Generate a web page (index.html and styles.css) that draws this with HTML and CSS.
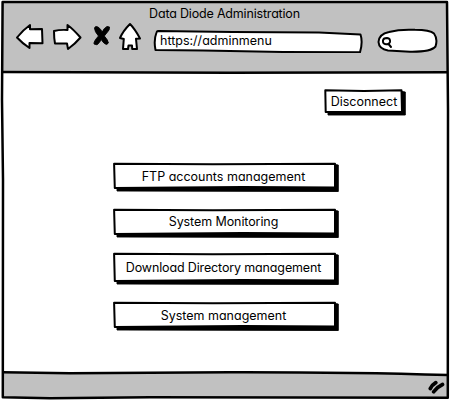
FILE: index.html
```html
<!DOCTYPE html>
<html lang="en">
<head>
<meta charset="utf-8">
<title>Data Diode Administration</title>
<link rel="stylesheet" href="styles.css">
</head>
<body>
<div class="window">
  <svg class="frame" viewBox="0 0 450 400" aria-hidden="true">
    <path class="chrome" d="M2.5 2 H448 V72.3 H2.5Z"/>
    <path class="chrome" d="M2.5 372.3 L70 373 L230 372.3 Q350 372 448 375 V397.6 L150 397.2 L50 398 L3 397Z"/>
    <path class="edge" d="M2.6 2 L447 2 L448 110 L447.8 397.8 L150 397.3 L50 398.2 L2.8 397.3 L3 180 L2 100Z"/>
    <path class="edge" d="M3 72.1 L230 72.8 L448 72.3 M3 372.3 L70 373.3 L230 372.2 Q350 372 448 375"/>
  </svg>
  <header class="header">
    <h1 class="title">Data Diode Administration</h1>
    <nav class="toolbar">
      <svg class="icon back" viewBox="14 22 32 30"><path class="shape" d="M17 37.5 Q23 30 30 25 L30 29.3 L42 29 L42.5 43.3 L29.5 43 L29.5 48 Q22 43 17 37.5Z"/></svg>
      <svg class="icon forward" viewBox="51 22 32 30"><path class="shape" d="M54 31 Q60 29.5 67.5 30 L67.5 25 Q73 29 80.5 37.5 Q75 44 68 49 L67 43.5 L55 43.5 Q54 38 54 31Z"/></svg>
      <svg class="icon stop" viewBox="92 24 20 24"><path class="ink" d="M94.5 28 Q95 25.5 98 27 Q101 29 102.2 32 Q104 28 107 26.5 L109.5 27 Q109.8 30 107.5 32 L104.3 36 Q108 40 108.4 43 Q107 45.5 104.5 43.5 Q102.5 42 101.3 39.5 Q99.5 43 97 44.8 L94 44 Q93.5 41.5 98.5 36 Q94.5 31.5 94.5 28Z"/></svg>
      <svg class="icon home" viewBox="117 20 26 32"><path class="shape" d="M130 24 Q135 29 140 38.5 L136 38.8 L137 49 L132.2 49 L132 45.5 L128.5 45.5 L128 49 L123 49 L123.8 39 L120 38 Q123 31 130 24Z"/></svg>
      <div class="address">
        <svg class="sketch" viewBox="0 0 212 24"><path class="shape" d="M5 2 L80 3 L166 3.5 L207.5 5.5 Q210 13 207 23.3 L130 23 L50 21.5 L2.5 21 Q.5 11 3.5 3.5 Q4 2 5 2Z"/></svg>
        <span class="label url">https://adminmenu</span>
      </div>
      <svg class="search" viewBox="376 27 62 27"><path class="shape" d="M389 32 Q400 29 415 29.8 Q430 30 434 33.5 Q438 39 435.5 46.5 Q431 52 410 51.7 L388 50.5 Q379 49 378.5 42 Q379 34 389 32Z"/><path class="lens" d="M383 40.5 Q383.2 38 387 38 Q390.5 38.5 390 42 Q389 44.5 386 44.2 Q382.5 44 383 40.5Z M388.5 44 L391 47"/></svg>
    </nav>
  </header>
  <main class="content">
    <button class="button disconnect">
      <svg class="sketch" viewBox="0 0 82 27"><path class="ink" d="M4 23 L78 22.5 V2.5 L81.3 3 L81.3 26 L4 26Z"/><path class="shape" d="M1.3 1.3 L40 2 L77.5 1.3 L78 22.7 L1.7 23Z"/></svg>
      <span class="label">Disconnect</span>
    </button>
    <div class="menu">
      <button class="button ftp">
        <svg class="sketch" viewBox="0 0 226 30"><path class="ink" d="M4 26 L222 25 V2.5 L225.3 3 L225.3 29.5 L4 29Z"/><path class="shape" d="M1.1 1.7 L100 2.2 L222 1.8 L222 25.4 L130 25 L1.8 26Z"/></svg>
        <span class="label">FTP accounts management</span>
      </button>
      <button class="button monitoring">
        <svg class="sketch" viewBox="0 0 226 30"><path class="ink" d="M4 26 L222 25 V2.5 L225.3 3 L225.3 29.5 L4 29Z"/><path class="shape" d="M1.1 1.7 L100 2.2 L222 1.8 L222 25.4 L130 25 L1.8 26Z"/></svg>
        <span class="label">System Monitoring</span>
      </button>
      <button class="button download">
        <svg class="sketch" viewBox="0 0 226 33"><path class="ink" d="M4 29 L222 28 V2.5 L225.3 3 L225.3 32.5 L4 32Z"/><path class="shape" d="M1.1 1.7 L100 2.2 L222 1.8 L222 28.4 L130 28 L1.8 29Z"/></svg>
        <span class="label">Download Directory management</span>
      </button>
      <button class="button system">
        <svg class="sketch" viewBox="0 0 226 30"><path class="ink" d="M4 26 L222 25 V2.5 L225.3 3 L225.3 29.5 L4 29Z"/><path class="shape" d="M1.1 1.7 L100 2.2 L222 1.8 L222 25.4 L130 25 L1.8 26Z"/></svg>
        <span class="label">System management</span>
      </button>
    </div>
  </main>
  <footer class="footer">
    <svg class="grip" viewBox="428 380 17 15"><path class="stroke" d="M430.3 388.6 Q432 385 435.8 382.7 M433.7 391.8 Q437 387 442.5 384.5"/></svg>
  </footer>
</div>
</body>
</html>
```

FILE: styles.css
```css
* { box-sizing: border-box; }
body {
  margin: 0;
  background: #fff;
  color: #000;
  font: 12.5px/16px Inter, "Open Sans", sans-serif;
  font-feature-settings: "cv11" 1, "ss01" 1;
}
.window {
  position: relative;
  display: flex;
  flex-direction: column;
  width: 450px;
  height: 400px;
  overflow: hidden;
}
.frame { position: absolute; inset: 0; width: 450px; height: 400px; }
.chrome { fill: #c1c1c1; }
.edge { fill: none; stroke: #000; stroke-width: 2.5; stroke-linejoin: round; }
.shape { fill: #fff; stroke: #000; stroke-width: 2; stroke-linejoin: round; }
.ink { fill: #000; stroke: #000; stroke-width: .9; stroke-linejoin: round; }
.lens { fill: none; stroke: #000; stroke-width: 2; stroke-linecap: round; }
.stroke { fill: none; stroke: #000; stroke-width: 3.7; stroke-linecap: round; }
.header { position: relative; height: 73px; padding-top: 6px; }
.title {
  margin: 0;
  padding-right: 1px;
  text-align: center;
  font-size: 12.5px;
  line-height: 15px;
  font-weight: 400;
  letter-spacing: -.18px;
}
.toolbar { display: flex; align-items: flex-start; padding-left: 14px; }
.icon { flex: none; }
.back, .forward { width: 32px; height: 30px; margin-top: 1px; }
.forward { margin-left: 5px; }
.stop { width: 20px; height: 24px; margin: 3px 0 0 9px; }
.home { width: 26px; height: 32px; margin: -1px 0 0 5px; }
.address {
  position: relative;
  width: 212px;
  height: 24px;
  margin: 8px 0 0 10px;
  padding: 4px 0 0 7px;
}
.search { width: 62px; height: 27px; margin: 6px 0 0 11px; }
.sketch { position: absolute; inset: 0; width: 100%; height: 100%; }
.label { position: relative; display: block; white-space: nowrap; }
.content {
  position: relative;
  display: flex;
  flex-direction: column;
  height: 299px;
  padding-top: 16px;
}
.button {
  position: relative;
  display: flex;
  justify-content: center;
  border: 0;
  padding: 7px 5px 0 0;
  background: none;
  color: inherit;
  font: inherit;
  font-feature-settings: inherit;
}
.disconnect { align-self: flex-start; width: 82px; height: 27px; margin-left: 324px; padding: 5px 2px 0 0; }
.menu { display: flex; flex-direction: column; margin: 46px 0 0 113px; }
.menu .button { width: 226px; height: 30px; }
.menu .monitoring { margin-top: 16px; padding-top: 6px; letter-spacing: -.09px; }
.menu .download { height: 33px; margin-top: 14px; padding-top: 8px; letter-spacing: -.14px; }
.menu .system { margin-top: 16px; padding-top: 7px; }
.footer { position: relative; display: flex; justify-content: flex-end; height: 28px; padding: 8px 5px 0 0; }
.grip { width: 17px; height: 15px; }
```
